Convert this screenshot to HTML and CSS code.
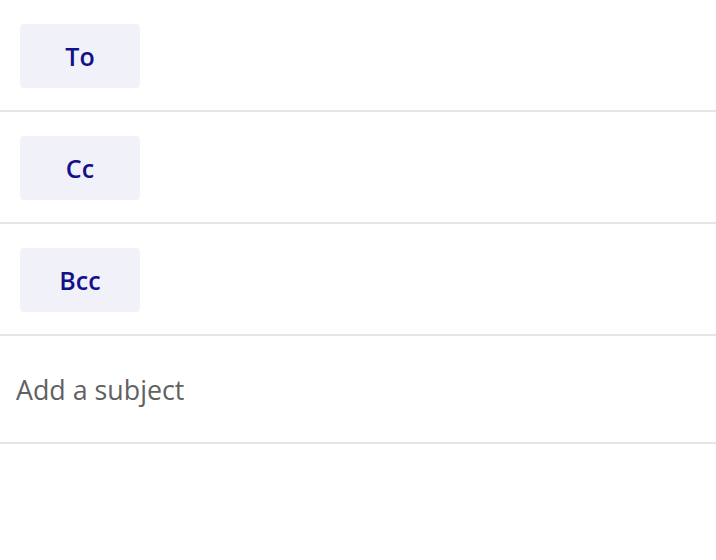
FILE: index.html
```html
<!DOCTYPE html>
<html>
<head>
<meta charset="utf-8">
<link rel="stylesheet" href="styles.css">
</head>
<body>
<div class="compose">
  <div class="row"><button class="chip">To</button></div>
  <div class="row"><button class="chip">Cc</button></div>
  <div class="row"><button class="chip">Bcc</button></div>
  <div class="subject">Add a subject</div>
</div>
</body>
</html>
```
FILE: styles.css
```css
html, body {
  margin: 0;
  padding: 0;
  background: #ffffff;
  font-family: "Open Sans", "Noto Sans", sans-serif;
}
.compose {
  display: flex;
  flex-direction: column;
}
.row {
  border-bottom: 2px solid #e6e6e6;
  padding: 24px 20px 0;
  box-sizing: content-box;
  height: 86px;
}
.chip {
  width: 120px;
  height: 64px;
  border: none;
  border-radius: 4px;
  background: #f1f1fa;
  color: #12108a;
  font-family: "Open Sans", "Noto Sans", sans-serif;
  font-weight: 600;
  font-size: 25px;
  padding: 0;
  display: flex;
  align-items: center;
  justify-content: center;
}
.subject {
  height: 106px;
  border-bottom: 2px solid #e6e6e6;
  padding-left: 16px;
  display: flex;
  align-items: center;
  font-size: 26.8px;
  color: #616161;
  box-sizing: content-box;
}
```
